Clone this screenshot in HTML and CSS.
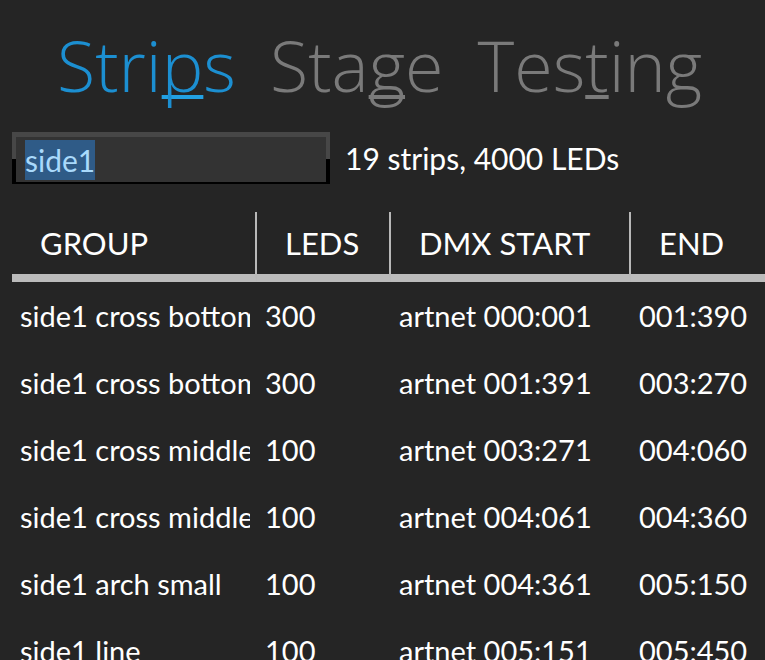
FILE: index.html
```html
<!DOCTYPE html>
<html lang="en">
<head>
  <meta charset="UTF-8" />
  <title>Strips</title>
  <link rel="stylesheet" href="styles.css">
</head>
<body>
  <nav class="tabs">
    <span class="tab active">Stri<u>p</u>s</span>
    <span class="tab">Sta<u>g</u>e</span>
    <span class="tab">Tes<u>t</u>ing</span>
  </nav>
  <div class="filter">
    <div class="search"><span class="sel">side1</span></div>
    <span class="count">19 strips, 4000 LEDs</span>
  </div>
  <table class="strips">
    <colgroup>
      <col class="c-group">
      <col class="c-leds">
      <col class="c-start">
      <col class="c-end">
    </colgroup>
    <thead>
      <tr><th>GROUP</th><th>LEDS</th><th>DMX START</th><th>END</th></tr>
    </thead>
    <tbody>
      <tr><td><div class="clip">side1 cross bottom</div></td><td>300</td><td>artnet 000:001</td><td>001:390</td></tr>
      <tr><td><div class="clip">side1 cross bottom</div></td><td>300</td><td>artnet 001:391</td><td>003:270</td></tr>
      <tr><td><div class="clip">side1 cross middle</div></td><td>100</td><td>artnet 003:271</td><td>004:060</td></tr>
      <tr><td><div class="clip">side1 cross middle</div></td><td>100</td><td>artnet 004:061</td><td>004:360</td></tr>
      <tr><td><div class="clip">side1 arch small</div></td><td>100</td><td>artnet 004:361</td><td>005:150</td></tr>
      <tr><td><div class="clip">side1 line</div></td><td>100</td><td>artnet 005:151</td><td>005:450</td></tr>
    </tbody>
  </table>
</body>
</html>
```

FILE: styles.css
```css
body {
  margin: 0;
  width: 765px;
  height: 660px;
  overflow: hidden;
  background-color: #252525;
  color: #fff;
  font-family: Lato, 'Open Sans', sans-serif;
}
.tabs {
  display: flex;
  gap: 34px;
  height: 80px;
  padding: 25px 0 0 57px;
  font-family: 'Open Sans', sans-serif;
  font-weight: 300;
  font-size: 70px;
  line-height: 80px;
  color: #7a7a7a;
}
.tab u {
  text-decoration: underline;
  text-decoration-thickness: 4px;
  text-underline-offset: 3px;
  text-decoration-skip-ink: none;
}
.tab.active {
  color: #1c8fd1;
}
.tab.active u {
  text-decoration-color: #22a0e2;
}
.filter {
  display: flex;
  align-items: center;
  gap: 15px;
  margin: 27px 0 0 12px;
}
.search {
  width: 318px;
  height: 52px;
  box-sizing: border-box;
  padding: 3px 9px;
  background: #333;
  border-style: solid;
  border-width: 5px 4px 2px;
  border-image: linear-gradient(#474747 52%, #000 52%) 5 4 2;
}
.sel {
  display: inline-block;
  height: 40px;
  line-height: 40px;
  font-size: 30px;
  background: #2f5b87;
  color: #a9d9fb;
}
.count {
  font-size: 30px;
}
.strips {
  margin: 28px 0 0 12px;
  table-layout: fixed;
  width: 819px;
  border-collapse: separate;
  border-spacing: 0;
}
.c-group { width: 245px; }
.c-leds { width: 134px; }
.c-start { width: 240px; }
.c-end { width: 200px; }
.strips th {
  height: 62px;
  padding: 0 0 0 28px;
  text-align: left;
  font-weight: normal;
  font-size: 31px;
  border-right: 2px solid #b8b8b8;
  border-bottom: 8px solid #bbb;
}
.strips th:last-child {
  border-right: none;
}
.strips td {
  height: 67px;
  padding: 0 0 0 8px;
  font-size: 29px;
  white-space: nowrap;
  overflow: hidden;
}
.strips .clip {
  margin-right: 7px;
  overflow: hidden;
}
```
